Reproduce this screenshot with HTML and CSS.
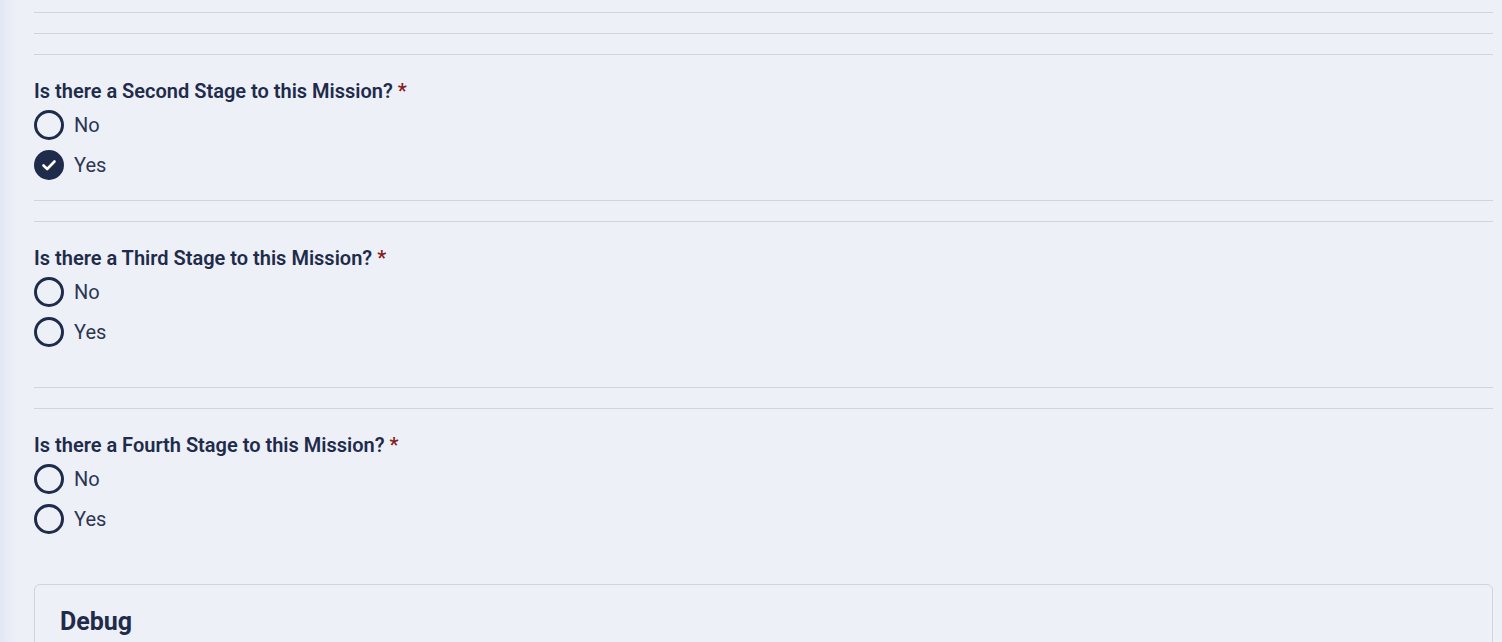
FILE: index.html
```html
<!DOCTYPE html>
<html lang="en">
<head>
<meta charset="utf-8">
<title>Mission Stages</title>
<link rel="stylesheet" href="styles.css">
</head>
<body>
<div class="page">
  <main class="form">
    <hr class="rule">
    <hr class="rule">
    <hr class="rule">

    <div class="field" role="radiogroup">
      <div class="label">Is there a Second Stage to this Mission? <span class="req">*</span></div>
      <div class="options">
        <label class="opt"><span class="radio"></span><span class="opt-text">No</span></label>
        <label class="opt"><span class="radio checked"><svg viewBox="0 0 30 30" width="30" height="30"><path d="M9.5 15.5 L13.2 19 L20.5 11.5" fill="none" stroke="#fff" stroke-width="2.6" stroke-linecap="round" stroke-linejoin="round"/></svg></span><span class="opt-text">Yes</span></label>
      </div>
    </div>

    <hr class="rule">
    <hr class="rule">

    <div class="field field-tall" role="radiogroup">
      <div class="label">Is there a Third Stage to this Mission? <span class="req">*</span></div>
      <div class="options">
        <label class="opt"><span class="radio"></span><span class="opt-text">No</span></label>
        <label class="opt"><span class="radio"></span><span class="opt-text">Yes</span></label>
      </div>
    </div>

    <hr class="rule">
    <hr class="rule">

    <div class="field field-last" role="radiogroup">
      <div class="label">Is there a Fourth Stage to this Mission? <span class="req">*</span></div>
      <div class="options">
        <label class="opt"><span class="radio"></span><span class="opt-text">No</span></label>
        <label class="opt"><span class="radio"></span><span class="opt-text">Yes</span></label>
      </div>
    </div>

    <section class="debug">
      <h2 class="debug-title">Debug</h2>
    </section>
  </main>
</div>
</body>
</html>
```

FILE: styles.css
```css
html, body {
  margin: 0;
  padding: 0;
  height: 100%;
  overflow: hidden;
}
body {
  background: linear-gradient(to right, #e3e7f3 0px, #eaedf6 10px, #edf0f7 18px, #edf0f7 100%);
  font-family: Roboto, "Liberation Sans", Arial, sans-serif;
  color: #1f2b4b;
}
.page {
  padding: 12px 9px 0 34px;
}
.form {
  display: flex;
  flex-direction: column;
}
.rule {
  border: 0;
  border-top: 1px solid #d1d4db;
  margin: 0 0 20px 0;
  height: 0;
}
.rule + .field { margin-top: 2px; }
.field {
  margin-bottom: 20px;
  display: flex;
  flex-direction: column;
}
.field-tall { margin-bottom: 40px; }
.field-last { margin-bottom: 50px; }
.label {
  font-size: 20px;
  line-height: 28px;
  font-weight: 600;
  color: #1f2b4b;
  margin-bottom: 5px;
}
.req { color: #861b1b; }
.options {
  display: flex;
  flex-direction: column;
  gap: 10px;
}
.opt {
  display: flex;
  align-items: center;
  gap: 10px;
  height: 30px;
}
.radio {
  box-sizing: border-box;
  width: 30px;
  height: 30px;
  border-radius: 50%;
  border: 3px solid #1f2b4b;
  display: flex;
  align-items: center;
  justify-content: center;
  flex: none;
}
.radio.checked {
  background: #1f2b4b;
  border: 0;
}
.opt-text {
  font-size: 20px;
  line-height: 24px;
  color: #2c3653;
}
.debug {
  border: 1px solid #d1d4db;
  border-radius: 6px;
  padding: 23px 25px 18px;
}
.debug-title {
  margin: 0;
  font-size: 25px;
  line-height: 28px;
  font-weight: 700;
  color: #1f2b4b;
}
```
